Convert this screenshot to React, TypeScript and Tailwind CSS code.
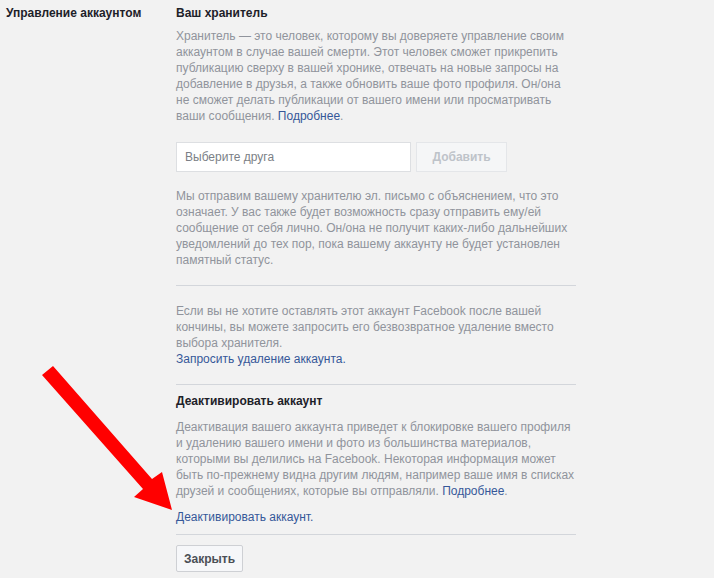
import React from "react";

const muted = "text-[#90949c]";
const link = "text-[#365899]";

function Divider({ className = "" }: { className?: string }) {
  return <div className={`h-px bg-[#d3d6db] ${className}`} />;
}

function Arrow() {
  // red annotation arrow laid over the page
  return (
    <svg
      className="absolute left-0 top-0 pointer-events-none"
      width="714"
      height="578"
      viewBox="0 0 714 578"
    >
      <polygon
        fill="#ff0000"
        points="53,366 152,479 162,472 172,510 134,497 143,489 42,375"
      />
    </svg>
  );
}

export default function App() {
  return (
    <div
      className="relative w-full h-[578px] bg-[#f2f2f2] flex text-[12px] leading-[16px] text-[#1d2129] overflow-hidden"
      style={{ fontFamily: '"Liberation Sans", Arial, sans-serif' }}
    >
      <div className="w-[176px] shrink-0 pl-[6px] pt-[5px] font-bold">
        Управление аккаунтом
      </div>

      <div className="w-[400px] pt-[5px] flex flex-col">
        <h2 className="font-bold mb-[7px]">Ваш хранитель</h2>
        <p className={muted}>
          Хранитель — это человек, которому вы доверяете управление своим
          аккаунтом в случае вашей смерти. Этот человек сможет прикрепить
          публикацию сверху в вашей хронике, отвечать на новые запросы на
          добавление в друзья, а также обновить ваше фото профиля. Он/она не
          сможет делать публикации от вашего имени или просматривать ваши
          сообщения. <span className={link}>Подробнее</span>.
        </p>

        <div className="flex gap-[5px] mt-[18px]">
          <div className="w-[235px] h-[30px] bg-white border border-[#dddfe2] flex items-center px-[8px] text-[#7b7f86]">
            Выберите друга
          </div>
          <button className="w-[91px] h-[30px] bg-[#f5f6f7] border border-[#e4e6e9] font-bold text-[#bec3c9]">
            Добавить
          </button>
        </div>

        <p className={`${muted} mt-[16px]`}>
          Мы отправим вашему хранителю эл. письмо с объяснением, что это
          означает. У вас также будет возможность сразу отправить ему/ей
          сообщение от себя лично. Он/она не получит каких-либо дальнейших
          уведомлений до тех пор, пока вашему аккаунту не будет установлен
          памятный статус.
        </p>

        <Divider className="mt-[17px]" />

        <p className={`${muted} mt-[17px]`}>
          Если вы не хотите оставлять этот аккаунт Facebook после вашей
          кончины, вы можете запросить его безвозвратное удаление вместо выбора
          хранителя.
        </p>
        <a className={link}>Запросить удаление аккаунта.</a>

        <Divider className="mt-[17px]" />

        <h2 className="font-bold mt-[8px]">Деактивировать аккаунт</h2>
        <p className={`${muted} mt-[10px]`}>
          Деактивация вашего аккаунта приведет к блокировке вашего профиля и
          удалению вашего имени и фото из большинства материалов, которыми вы
          делились на Facebook. Некоторая информация может быть по-прежнему
          видна другим людям, например ваше имя в списках друзей и сообщениях,
          которые вы отправляли. <span className={link}>Подробнее</span>.
        </p>
        <a className={`${link} mt-[10px]`}>Деактивировать аккаунт.</a>

        <Divider className="mt-[9px]" />

        <div className="mt-[10px]">
          <button className="h-[27px] px-[7px] bg-[#f6f7f9] border border-[#ced0d4] rounded-[2px] font-bold text-[#4b4f56]">
            Закрыть
          </button>
        </div>
      </div>

      <Arrow />
    </div>
  );
}
